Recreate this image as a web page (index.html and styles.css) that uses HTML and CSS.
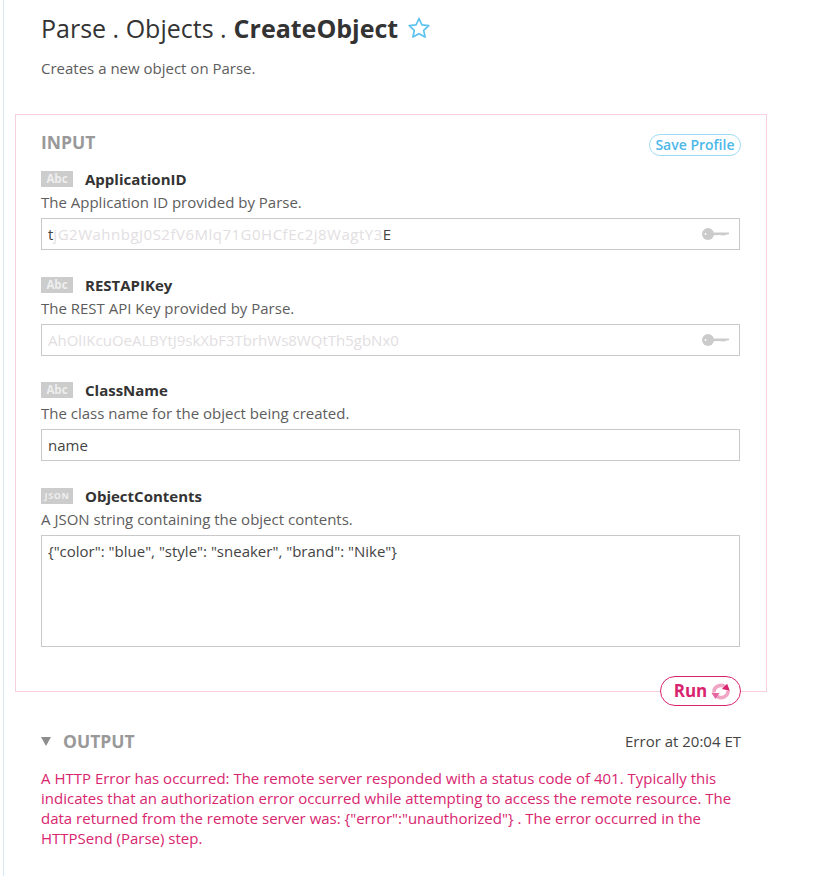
FILE: index.html
```html
<!DOCTYPE html>
<html lang="en">
<head>
<meta charset="utf-8">
<title>Parse . Objects . CreateObject</title>
<link rel="stylesheet" href="styles.css">
</head>
<body>
<main class="page">
  <header class="head">
    <h1 class="title"><span class="crumb">Parse . Objects .</span><b>CreateObject</b>
      <svg class="star" width="24" height="24" viewBox="0 0 24 24"><path d="M12 2.5l2.900 6.300 6.900.8-5.100 4.700 1.400 6.800-6.100-3.400-6.100 3.400 1.400-6.800-5.100-4.700 6.900-.8z" fill="none" stroke="#5cc3ee" stroke-width="1.700" stroke-linejoin="round"/></svg>
    </h1>
    <p class="sub">Creates a new object on Parse.</p>
  </header>

  <section class="input-box">
    <div class="input-head">
      <h2 class="section">INPUT</h2>
      <button class="save">Save Profile</button>
    </div>

    <div class="field">
      <div class="label"><span class="type">Abc</span><strong>ApplicationID</strong></div>
      <p class="desc">The Application ID provided by Parse.</p>
      <div class="box">
        <span class="val">t<span class="mask wide">jG2WahnbgJ0S2fV6Mlq71G0HCfEc2j8WagtY3</span>E</span>
        <svg class="key" width="27" height="12" viewBox="0 0 27 12"><circle cx="6" cy="6" r="6" fill="#cbcbcb"/><path d="M10 4.500h16.500a.8.8 0 0 1 0 1.800l-3.500.6-1 .8-1-.7-1 .7-1-.7-8.500.2z" fill="#cbcbcb"/><circle cx="3.500" cy="6" r=".9" fill="#fff"/></svg>
      </div>
    </div>

    <div class="field">
      <div class="label"><span class="type">Abc</span><strong>RESTAPIKey</strong></div>
      <p class="desc">The REST API Key provided by Parse.</p>
      <div class="box">
        <span class="val mask">AhOlIKcuOeALBYtJ9skXbF3TbrhWs8WQtTh5gbNx0</span>
        <svg class="key" width="27" height="12" viewBox="0 0 27 12"><circle cx="6" cy="6" r="6" fill="#cbcbcb"/><path d="M10 4.500h16.500a.8.8 0 0 1 0 1.800l-3.500.6-1 .8-1-.7-1 .7-1-.7-8.500.2z" fill="#cbcbcb"/><circle cx="3.500" cy="6" r=".9" fill="#fff"/></svg>
      </div>
    </div>

    <div class="field">
      <div class="label"><span class="type">Abc</span><strong>ClassName</strong></div>
      <p class="desc">The class name for the object being created.</p>
      <div class="box"><span class="val">name</span></div>
    </div>

    <div class="field last">
      <div class="label"><span class="type json">JSON</span><strong>ObjectContents</strong></div>
      <p class="desc">A JSON string containing the object contents.</p>
      <div class="box area"><span class="val">{"color": "blue", "style": "sneaker", "brand": "Nike"}</span></div>
    </div>

    <button class="run">Run
      <svg class="spin" width="20" height="17" viewBox="0 0 20 17">
        <path d="M3 9.500A7 6.500 0 0 1 14.500 4" fill="none" stroke="#f0a5c4" stroke-width="3.500"/>
        <path d="M17 7.500A7 6.500 0 0 1 5.500 13" fill="none" stroke="#f0a5c4" stroke-width="3.500"/>
        <path d="M11.500 7h8L15.500 .8z" fill="#d8246f" transform="rotate(12 15.500 4)"/>
        <path d="M.5 10h8l-4 6z" fill="#e466a0"/>
      </svg>
    </button>
  </section>

  <section class="output">
    <div class="output-head">
      <h2 class="section out"><span class="tri"></span>OUTPUT</h2>
      <span class="time">Error at 20:04 ET</span>
    </div>
    <p class="error">A HTTP Error has occurred: The remote server responded with a status code of 401. Typically this indicates that an authorization error occurred while attempting to access the remote resource. The data returned from the remote server was: {"error":"unauthorized"} . The error occurred in the HTTPSend (Parse) step.</p>
  </section>
</main>
</body>
</html>
```

FILE: styles.css
```css
* { box-sizing: border-box; }
html, body { margin: 0; padding: 0; background: #fff; }
body { font-family: "Open Sans", sans-serif; font-size: 15px; color: #555; }

.page {
  margin-left: 3px;
  width: 765px;
  min-height: 876px;
  border-left: 1px solid #d9eaf4;
  padding: 0 0 0 11px;
}

.head { padding: 10px 0 0 26px; height: 114px; }
.title {
  margin: 0;
  font-size: 25px;
  line-height: 36px;
  font-weight: 400;
  color: #333;
  display: flex;
  align-items: center;
}
.title b { font-weight: 700; margin-left: 7px; }
.star { margin-left: 9px; }
.sub { margin: 12px 0 0; line-height: 20px; color: #5d5d5d; }

.input-box {
  position: relative;
  width: 752px;
  height: 578px;
  border: 1px solid #f8cfe0;
  padding: 15px 26px 0 25px;
}
.input-head { display: flex; justify-content: space-between; align-items: flex-start; height: 41px; }
.section { margin: 0; font-size: 17.500px; line-height: 24px; font-weight: 700; color: #999; }
.save {
  margin: 4px -1px 0 0;
  height: 22px;
  width: 92px;
  padding: 0;
  border: 1px solid #9fdcf6;
  border-radius: 11px;
  background: #fff;
  color: #4cb8e8;
  font: 600 14px/20px "Open Sans", sans-serif;
}

.field { height: 105.670px; }
.field.last { height: auto; }
.label { display: flex; align-items: center; height: 16px; }
.label strong { margin-left: 12px; font-size: 15px; font-weight: 700; color: #333; }
.type {
  width: 32px;
  height: 16px;
  background: #ccc;
  color: #eee;
  font-size: 11.500px;
  font-weight: 700;
  line-height: 16px;
  text-align: center;
}
.type.json { font-size: 9px; letter-spacing: .6px; }
.desc { margin: 4px 0 0; line-height: 22px; color: #5d5d5d; height: 27px; }

.box {
  display: flex;
  justify-content: space-between;
  align-items: center;
  height: 32px;
  border: 1px solid #c9c9c9;
  padding: 0 10px 0 6px;
  background: #fff;
}
.box.area { height: 112px; align-items: flex-start; padding-top: 5px; }
.val { color: #444; line-height: 20px; white-space: nowrap; }
.mask { color: #e2dee2; }
.mask.wide { letter-spacing: .5px; }
.key { flex: none; }

.run {
  position: absolute;
  right: 25px;
  bottom: -15px;
  display: flex;
  align-items: center;
  justify-content: center;
  gap: 4px;
  width: 81px;
  height: 30px;
  padding: 0 0 0 4px;
  border: 1px solid #d8246f;
  border-radius: 15px;
  background: #fff;
  color: #d8246f;
  font: 700 17px/20px "Open Sans", sans-serif;
}

.output { width: 752px; padding: 37px 26px 0 26px; }
.output-head { display: flex; justify-content: space-between; align-items: center; height: 24px; }
.section.out { display: flex; align-items: center; }
.tri {
  width: 0;
  height: 0;
  margin-right: 12px;
  border-left: 5.500px solid transparent;
  border-right: 5.500px solid transparent;
  border-top: 9px solid #8d8d8d;
}
.time { color: #444; }
.error { margin: 15px 0 0; line-height: 20px; color: #d8266f; }
```
